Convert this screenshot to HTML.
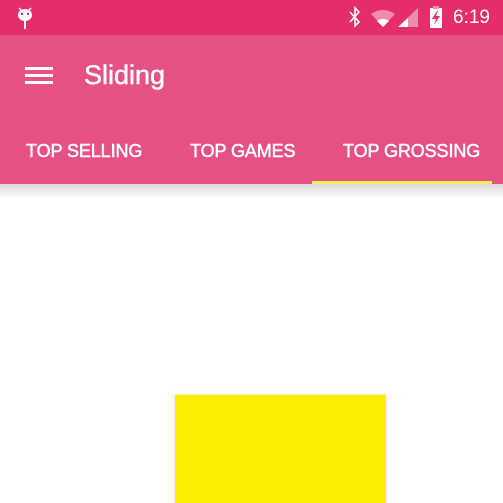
<!DOCTYPE html>
<html><head><style>
body{margin:0;width:503px;height:503px;overflow:hidden;background:#fff;font-family:"Liberation Sans",sans-serif;position:relative}
.sb{position:absolute;left:0;top:0;width:503px;height:35px;background:#e52d6e}
.ab{position:absolute;left:0;top:35px;width:503px;height:149px;background:#e75084}
.t{position:absolute;color:#fff}
.tab{position:absolute;top:141px;color:#fff;font-size:18px;font-weight:normal;-webkit-text-stroke:0.5px #fff;letter-spacing:-0.1px}
</style></head><body>
<div class="sb"></div>
<div class="ab"></div>
<svg style="position:absolute;left:0;top:0" width="503" height="35">
<g fill="#fff">
<ellipse cx="25" cy="15" rx="7" ry="6"/><rect x="24" y="19" width="2" height="10"/>
<line x1="19" y1="8" x2="21" y2="10" stroke="#fff" stroke-width="1.5"/><line x1="31" y1="8" x2="29" y2="10" stroke="#fff" stroke-width="1.5"/>
</g>
<circle cx="22" cy="14" r="1.2" fill="#e52d6e"/><circle cx="28" cy="14" r="1.2" fill="#e52d6e"/>
<path d="M350 12 L359 22 L355 26 L355 8 L359 12 L350 22" stroke="#fff" stroke-width="1.6" fill="none"/>
<path d="M371 14 Q383 6 395 14 L383 27 Z" fill="#f08bb0"/>
<path d="M377 21 Q383 17 389 21 L383 27 Z" fill="#fff"/>
<path d="M398 27 L418 8 L418 27 Z" fill="#f08bb0"/>
<path d="M398 27 L408 18 L408 27 Z" fill="#fff"/>
<rect x="430" y="8" width="12" height="20" fill="#fff"/><rect x="433" y="6" width="6" height="3" fill="#f08bb0"/>
<path d="M437 11 L432 19 L436 19 L434 25 L440 16 L436 16 L438 11 Z" fill="#e52d6e"/>
</svg>
<div class="t" style="left:453px;top:7px;font-size:19px">6:19</div>
<div style="position:absolute;left:25px;top:67px;width:28px;height:3px;background:#fff"></div>
<div style="position:absolute;left:25px;top:74px;width:28px;height:3px;background:#fff"></div>
<div style="position:absolute;left:25px;top:81px;width:28px;height:3px;background:#fff"></div>
<div class="t" style="left:84px;top:60px;font-size:27px;-webkit-text-stroke:0.5px #fff">Sliding</div>
<div class="tab" style="left:26px">TOP SELLING</div>
<div class="tab" style="left:190px">TOP GAMES</div>
<div class="tab" style="left:343px">TOP GROSSING</div>
<div style="position:absolute;left:312px;top:181px;width:180px;height:4px;background:#f0ee5a"></div>
<div style="position:absolute;left:0;top:184px;width:503px;height:14px;background:linear-gradient(#dcd8dc,#fff)"></div>
<div style="position:absolute;left:175px;top:395px;width:211px;height:108px;background:#fbee00;box-shadow:0 0 4px rgba(0,0,0,0.15)"></div>
</body></html>
